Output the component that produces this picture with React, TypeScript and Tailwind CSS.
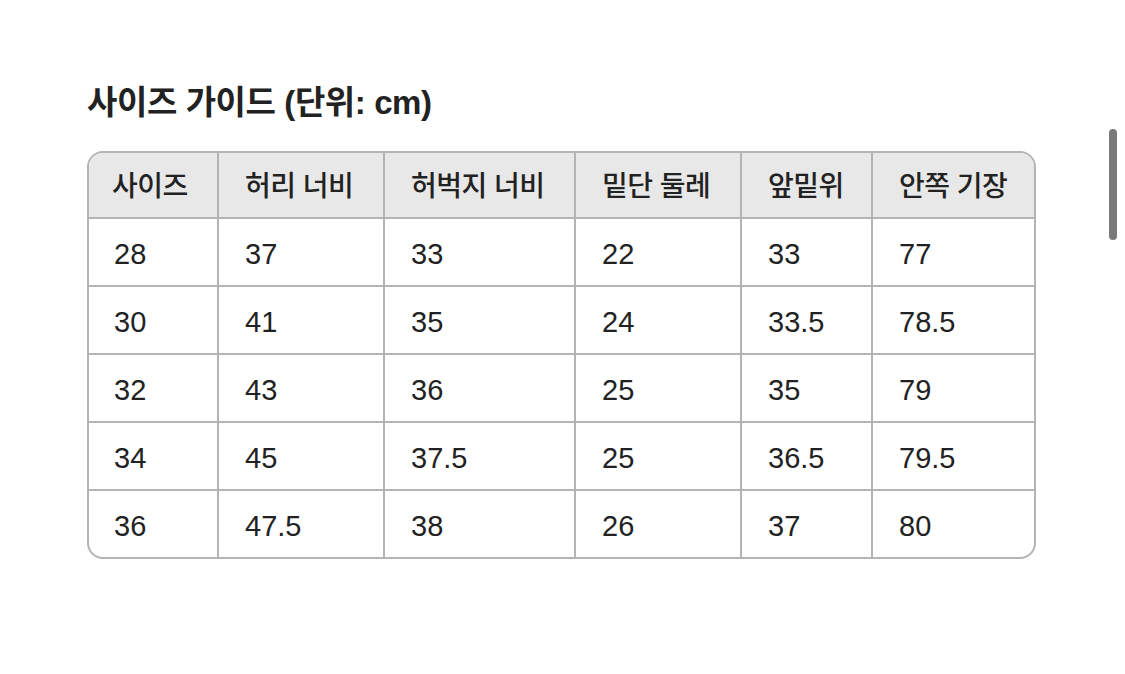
const headers = ["사이즈", "허리 너비", "허벅지 너비", "밑단 둘레", "앞밑위", "안쪽 기장"]

const rows = [
  ["28", "37", "33", "22", "33", "77"],
  ["30", "41", "35", "24", "33.5", "78.5"],
  ["32", "43", "36", "25", "35", "79"],
  ["34", "45", "37.5", "25", "36.5", "79.5"],
  ["36", "47.5", "38", "26", "37", "80"],
]

const widths = ["w-[128px]", "w-[166px]", "w-[191px]", "w-[166px]", "w-[131px]", "w-[163px]"]

export default function App() {
  return (
    <div
      className="relative h-[674px] w-[1125px] bg-white text-[#222]"
      style={{ fontFamily: '"Liberation Sans", "Noto Sans CJK KR", sans-serif' }}
    >
      <div className="pl-[87px] pt-[83px]">
        <h1 className="text-[33px] font-bold leading-[40px] tracking-[-0.4px]">사이즈 가이드 (단위: cm)</h1>

        <div className="mt-[28px] w-[949px] overflow-hidden rounded-[16px] border-2 border-[#b4b4b4]">
          <div className="flex h-[64px] bg-[#e8e8e8]">
            {headers.map((h, i) => (
              <div
                key={h}
                className={`${widths[i]} flex items-center pt-[3px] text-[28px] font-medium tracking-[-0.5px] ${
                  i === 0 ? "pl-[23px]" : "border-l-2 border-[#b4b4b4] pl-[26px]"
                }`}
              >
                {h}
              </div>
            ))}
          </div>
          {rows.map((r, ri) => (
            <div key={ri} className="flex h-[68px] border-t-2 border-[#b4b4b4]">
              {r.map((v, i) => (
                <div
                  key={i}
                  className={`${widths[i]} flex items-center pt-[6px] text-[29px] ${
                    i === 0 ? "pl-[25px]" : "border-l-2 border-[#b4b4b4] pl-[26px]"
                  }`}
                >
                  {v}
                </div>
              ))}
            </div>
          ))}
        </div>
      </div>

      {/* scrollbar thumb */}
      <div className="absolute left-[1109px] top-[129px] h-[111px] w-[8px] rounded-full bg-[#7a7a7a]" />
    </div>
  )
}
